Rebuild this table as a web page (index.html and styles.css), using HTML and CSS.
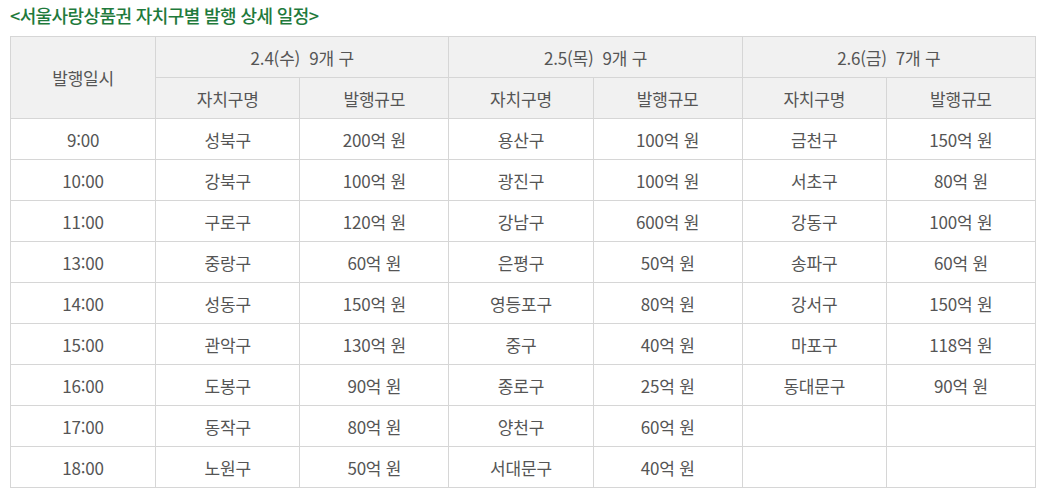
FILE: index.html
```html
<!DOCTYPE html>
<html lang="ko">
<head>
<meta charset="utf-8">
<link rel="stylesheet" href="styles.css">
</head>
<body>
<div class="wrap">
  <h2 class="title">&lt;서울사랑상품권 자치구별 발행 상세 일정&gt;</h2>
  <table class="sched">
    <colgroup>
      <col class="c1"><col class="c2"><col class="c3"><col class="c2"><col class="c3"><col class="c2"><col class="c3">
    </colgroup>
    <thead>
      <tr>
        <th rowspan="2">발행일시</th>
        <th colspan="2">2.4(수)&nbsp; 9개 구</th>
        <th colspan="2">2.5(목)&nbsp; 9개 구</th>
        <th colspan="2">2.6(금)&nbsp; 7개 구</th>
      </tr>
      <tr>
        <th>자치구명</th><th>발행규모</th>
        <th>자치구명</th><th>발행규모</th>
        <th>자치구명</th><th>발행규모</th>
      </tr>
    </thead>
    <tbody>
      <tr><td>9:00</td><td>성북구</td><td>200억 원</td><td>용산구</td><td>100억 원</td><td>금천구</td><td>150억 원</td></tr>
      <tr><td>10:00</td><td>강북구</td><td>100억 원</td><td>광진구</td><td>100억 원</td><td>서초구</td><td>80억 원</td></tr>
      <tr><td>11:00</td><td>구로구</td><td>120억 원</td><td>강남구</td><td>600억 원</td><td>강동구</td><td>100억 원</td></tr>
      <tr><td>13:00</td><td>중랑구</td><td>60억 원</td><td>은평구</td><td>50억 원</td><td>송파구</td><td>60억 원</td></tr>
      <tr><td>14:00</td><td>성동구</td><td>150억 원</td><td>영등포구</td><td>80억 원</td><td>강서구</td><td>150억 원</td></tr>
      <tr><td>15:00</td><td>관악구</td><td>130억 원</td><td>중구</td><td>40억 원</td><td>마포구</td><td>118억 원</td></tr>
      <tr><td>16:00</td><td>도봉구</td><td>90억 원</td><td>종로구</td><td>25억 원</td><td>동대문구</td><td>90억 원</td></tr>
      <tr><td>17:00</td><td>동작구</td><td>80억 원</td><td>양천구</td><td>60억 원</td><td></td><td></td></tr>
      <tr><td>18:00</td><td>노원구</td><td>50억 원</td><td>서대문구</td><td>40억 원</td><td></td><td></td></tr>
    </tbody>
  </table>
</div>
</body>
</html>
```

FILE: styles.css
```css
html, body {
  margin: 0;
  padding: 0;
  background: #ffffff;
}
body {
  font-family: "Noto Sans CJK KR", "Noto Sans", sans-serif;
  color: #555555;
}
.wrap {
  padding: 4px 0 0 10px;
}
.title {
  margin: 0 0 9px 0;
  font-size: 18px;
  line-height: 23px;
  font-weight: 500;
  color: #1f7a3c;
  letter-spacing: -0.6px;
}
.sched {
  border-collapse: collapse;
  table-layout: fixed;
  width: 1026px;
  font-size: 17px;
  letter-spacing: -0.2px;
}
.c1 { width: 145px; }
.c2 { width: 144px; }
.c3 { width: 149px; }
.sched th, .sched td {
  border: 1px solid #d6d6d6;
  text-align: center;
  padding: 0;
  height: 40px;
  font-weight: 400;
}
.sched th {
  background: #f1f1f1;
  color: #555555;
}
.sched td {
  color: #555555;
}
```
